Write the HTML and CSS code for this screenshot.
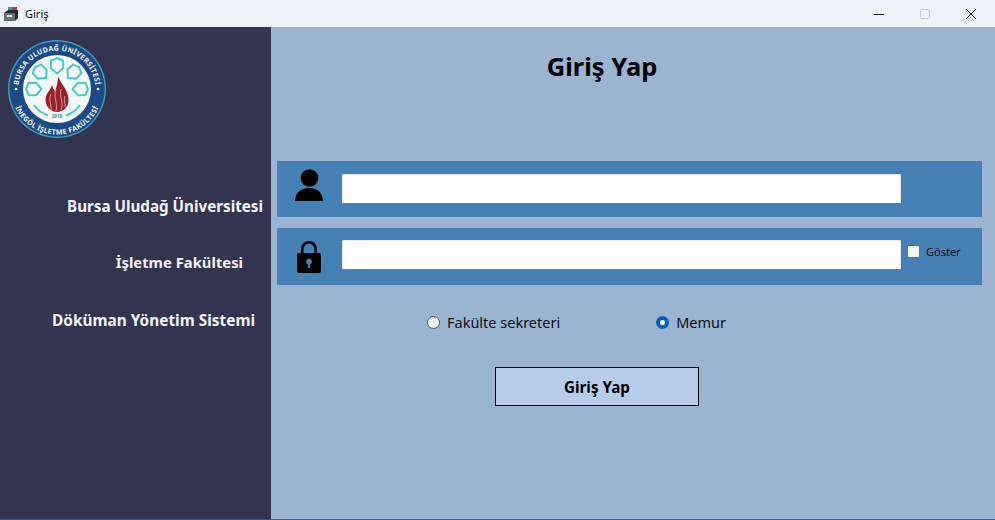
FILE: index.html
```html
<!DOCTYPE html>
<html>
<head>
	<meta charset="utf-8">
	<title>Giriş</title>
	<link rel="stylesheet" href="styles.css">
</head>
<body>

	<header class="titlebar">
		<svg class="app-icon" width="14" height="14" viewBox="0 0 14 14">
			<rect x="4" y="0" width="4" height="4" fill="#2a9fc4"/>
			<rect x="8" y="0" width="5" height="4" fill="#c8324a"/>
			<path d="M4 3 L14 3 L14 11 L11 14 L0 14 L0 6 Z" fill="#23292e"/>
			<path d="M0 6 L11 6 L11 14 L0 14 Z" fill="#66747a"/>
			<rect x="3" y="8" width="5" height="2" fill="#e4e8ea"/>
		</svg>
		<span class="app-title">Giriş</span>
		<div class="win-buttons">
			<span class="win-btn"><svg width="14" height="14" viewBox="0 0 14 14"><path d="M2 7.5 H12" stroke="#111" fill="none"/></svg></span>
			<span class="win-btn"><svg width="14" height="14" viewBox="0 0 14 14"><rect x="2.5" y="2.5" width="9" height="9" rx="1" stroke="#c4c8ce" fill="none"/></svg></span>
			<span class="win-btn"><svg width="14" height="14" viewBox="0 0 14 14"><path d="M2 2 L12 12 M12 2 L2 12" stroke="#111" fill="none"/></svg></span>
		</div>
	</header>

	<div class="window">
		<aside class="sidebar">
			<svg class="logo" width="100" height="100" viewBox="0 0 100 100">
				<defs>
					<path id="arc-top" d="M 11.5 53 A 38.6 38.6 0 1 1 88.5 53"/>
					<path id="arc-bottom" d="M 4.5 53 A 45.6 45.6 0 0 0 95.5 53"/>
					<path id="shield" d="M50 19 L56 21.5 L56.3 29 L50 34.5 L43.7 29 L44 21.5 Z"/>
				</defs>
				<circle cx="50" cy="50" r="49" fill="#3d9fb8"/>
				<circle cx="50" cy="50" r="47.6" fill="#1d4a86"/>
				<circle cx="50" cy="50" r="34" fill="#f4f8f8"/>
				<text class="logo-text"><textPath href="#arc-top" startOffset="50%" text-anchor="middle">BURSA ULUDAĞ ÜNİVERSİTESİ</textPath></text>
				<text class="logo-text"><textPath href="#arc-bottom" startOffset="50%" text-anchor="middle">İNEGÖL İŞLETME FAKÜLTESİ</textPath></text>
				<circle cx="9" cy="50" r="1.3" fill="#fff"/>
				<circle cx="91" cy="50" r="1.3" fill="#fff"/>
				<g fill="none" stroke="#4cc6cf" stroke-width="2">
					<use href="#shield"/>
					<use href="#shield" transform="rotate(-45 50 50)"/>
					<use href="#shield" transform="rotate(45 50 50)"/>
					<use href="#shield" transform="rotate(-90 50 50)"/>
					<use href="#shield" transform="rotate(90 50 50)"/>
					<path d="M27 66 A 28 28 0 0 0 41 76.5"/>
					<path d="M73 66 A 28 28 0 0 1 59 76.5"/>
				</g>
				<path d="M51 37 C53 44 61 50 61.5 60 C62 68 56 73 50 73 C44 73 38.5 68 38.5 60 C39 54 43 52 45 46 C46 49 47 51 48 52 C50 47 51 42 51 37 Z" fill="#98202c"/>
				<path d="M44 55 C41 61 45 66 44 71 M49 50 C46 58 51 64 49 72 M54 50 C52 58 57 63 54 71 M58 57 C56 62 59 65 58 68" stroke="#e3b9bc" stroke-width="0.8" fill="none"/>
				<text class="logo-year" x="50" y="78.5" text-anchor="middle">2010</text>
			</svg>
			<p class="side-label side-label-uni">Bursa Uludağ Üniversitesi</p>
			<p class="side-label side-label-fac">İşletme Fakültesi</p>
			<p class="side-label side-label-sys">Döküman Yönetim Sistemi</p>
		</aside>

		<main class="content">
			<h1 class="page-title">Giriş Yap</h1>

			<div class="field-row">
				<svg class="field-icon field-icon-user" width="30" height="32" viewBox="0 0 30 32">
					<circle cx="15.5" cy="9" r="8.8"/>
					<path d="M1 32 C1 24 7 19 15 19 C23 19 29 24 29 32 Z"/>
				</svg>
				<input class="field-input" type="text">
			</div>

			<div class="field-row field-row-pass">
				<svg class="field-icon" width="30" height="32" viewBox="0 0 26 32" fill-rule="evenodd">
					<path d="M5 13 V8 A8 8 0 0 1 21 8 V13 H18.4 V8 A5.4 5.4 0 0 0 7.6 8 V13 Z"/>
					<path d="M3 12 H23 A2 2 0 0 1 25 14 V30 A2 2 0 0 1 23 32 H3 A2 2 0 0 1 1 30 V14 A2 2 0 0 1 3 12 Z M13 17.5 A3 3 0 0 0 11.8 23.2 V27 H14.2 V23.2 A3 3 0 0 0 13 17.5 Z"/>
				</svg>
				<input class="field-input field-input-pass" type="password">
				<label class="show-pass"><span class="check-box"></span>Göster</label>
			</div>

			<div class="role-row">
				<label class="role"><span class="radio"></span>Fakülte sekreteri</label>
				<label class="role"><span class="radio radio-on"></span>Memur</label>
			</div>

			<button class="login-btn">Giriş Yap</button>
		</main>
	</div>

</body>
</html>
```

FILE: styles.css
```css
* {
	margin: 0;
	padding: 0;
	box-sizing: border-box;
}

html, body {
	height: 100%;
	overflow: hidden;
}

body {
	font-family: "Noto Sans", "Open Sans", sans-serif;
	display: flex;
	flex-direction: column;
	background: #2c5f80;
	padding-bottom: 1px;
}

.titlebar {
	height: 27px;
	flex: none;
	background: #eef2f9;
	display: flex;
	align-items: center;
	padding-left: 4px;
}

.app-icon {
	margin-right: 7px;
}

.app-title {
	font-size: 11px;
	color: #111;
}

.win-buttons {
	margin-left: auto;
	display: flex;
	padding-right: 1px;
}

.win-btn {
	width: 46px;
	display: flex;
	justify-content: center;
	align-items: center;
	height: 23px;
}

.window {
	flex: 1;
	display: flex;
}

.sidebar {
	width: 271px;
	flex: none;
	background: #33344f;
	color: #f4f5f8;
	display: flex;
	flex-direction: column;
	align-items: flex-end;
}

.logo {
	align-self: flex-start;
	margin: 12px 0 0 7px;
}

.logo-text {
	font-size: 7.1px;
	font-weight: 700;
	fill: #f2f5f8;
	letter-spacing: 0.3px;
}

.logo-year {
	font-size: 4.6px;
	fill: #3a8a9a;
	font-weight: 700;
}

.side-label {
	font-size: 15.2px;
	font-weight: 700;
	line-height: 20px;
}

.side-label-uni {
	margin-top: 57px;
	padding-right: 8px;
}

.side-label-fac {
	font-size: 14.8px;
	margin-top: 36px;
	padding-right: 28px;
}

.side-label-sys {
	font-size: 15.4px;
	margin-top: 39px;
	padding-right: 16px;
}

.content {
	flex: 1;
	background: #9ab4d2;
	padding: 0 13px 0 6px;
	display: flex;
	flex-direction: column;
}

.page-title {
	font-size: 25.5px;
	font-weight: 700;
	line-height: 34px;
	color: #000;
	text-align: center;
	margin: 22px 0 0 -55px;
}

.field-row {
	height: 56px;
	background: #4780b5;
	margin-top: 78px;
	display: flex;
	align-items: center;
	padding-left: 17px;
}

.field-row-pass {
	height: 57px;
	margin-top: 11px;
}

.field-icon {
	fill: #000;
	flex: none;
}

.field-icon-user {
	margin-top: -8px;
}

.field-input {
	width: 559px;
	height: 30px;
	margin-left: 18px;
	background: #fff;
	border: 1px solid #e8e8e8;
	border-bottom: 1px solid #77808a;
	border-radius: 2px;
	outline: none;
}

.field-input-pass {
	margin-top: -3px;
}

.show-pass {
	display: flex;
	align-items: center;
	font-size: 11px;
	color: #0a0a14;
	margin: -10px 0 0 6px;
}

.check-box {
	width: 13px;
	height: 13px;
	background: #f4f4f4;
	border: 1px solid #6a6f76;
	border-radius: 2px;
	margin-right: 6px;
}

.role-row {
	display: flex;
	margin-top: 25px;
	padding-left: 150px;
	height: 24px;
}

.role {
	display: flex;
	align-items: center;
	font-size: 14.5px;
	color: #0c0c14;
}

.role + .role {
	margin-left: 96px;
}

.radio {
	width: 13px;
	height: 13px;
	border-radius: 50%;
	background: #f6f6f6;
	border: 1px solid #555;
	margin-right: 7px;
}

.radio-on {
	background: #fff;
	border: 4px solid #0a5fb4;
}

.login-btn {
	width: 204px;
	height: 39px;
	margin: 33px 0 0 218px;
	background: #b7cde9;
	border: 1px solid #000;
	font-family: inherit;
	font-size: 15.2px;
	font-weight: 700;
	color: #000;
}
```
